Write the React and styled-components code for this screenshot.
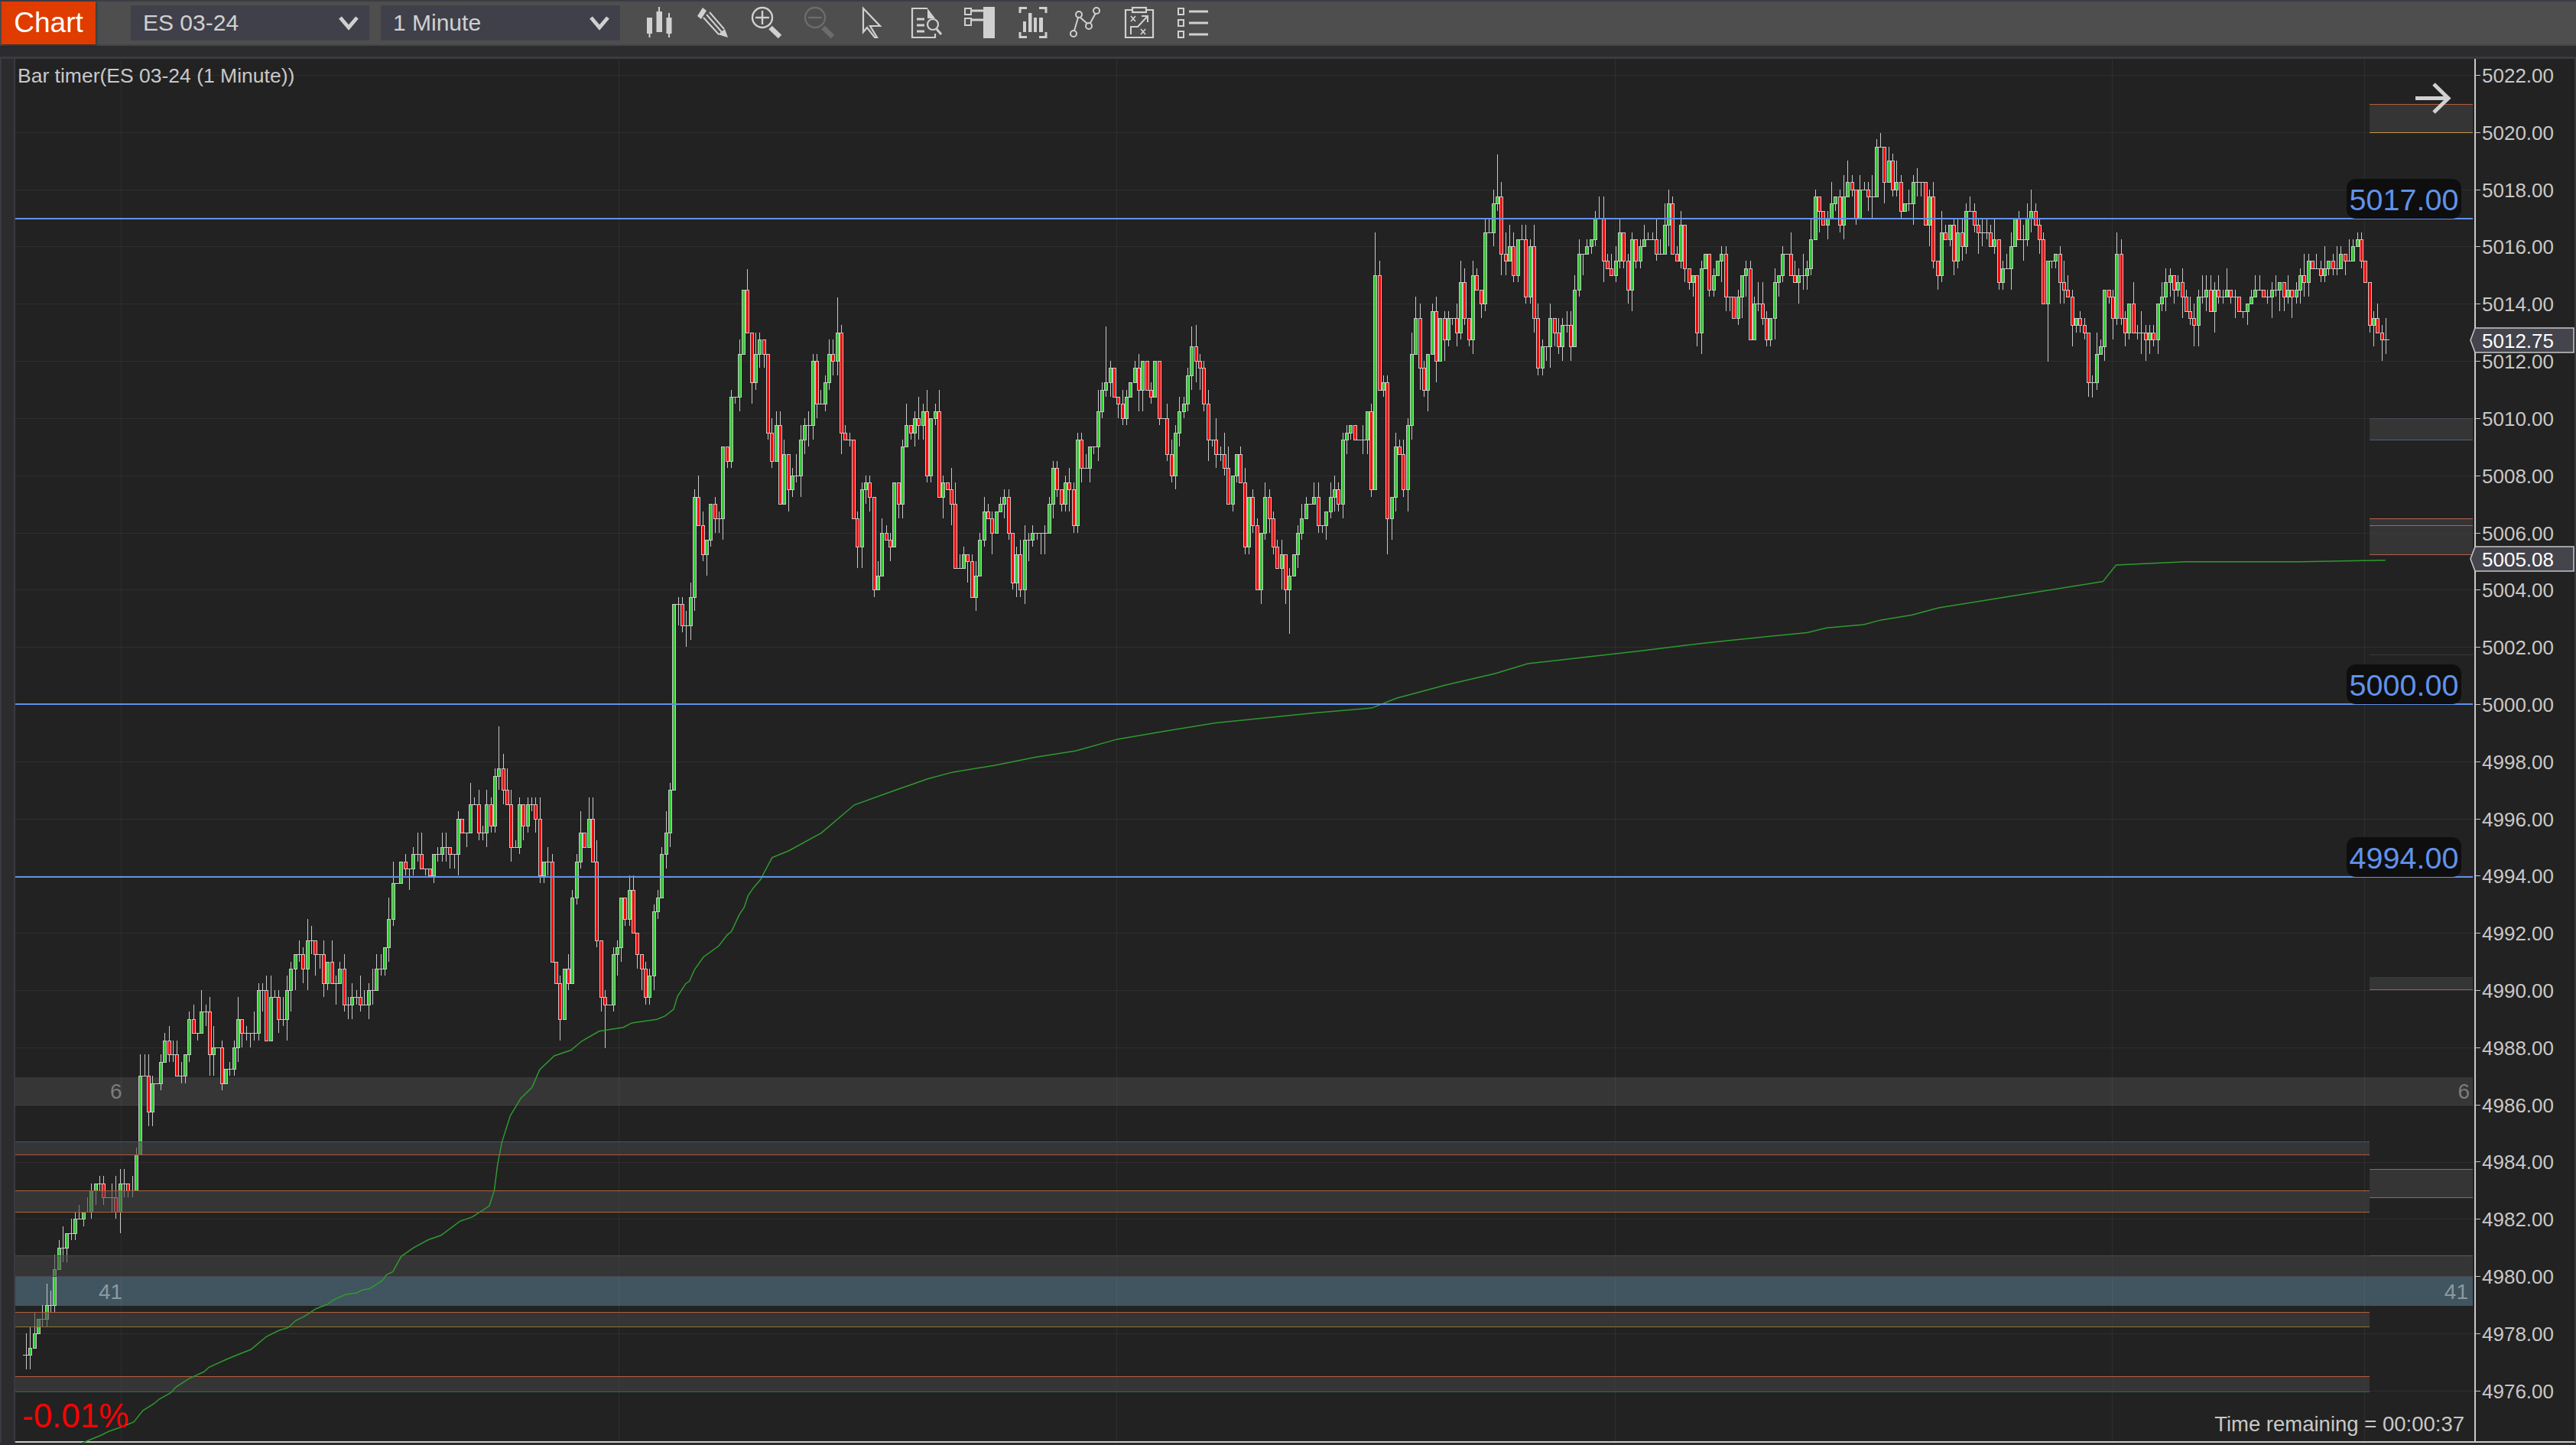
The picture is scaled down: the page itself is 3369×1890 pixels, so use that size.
import React from "react";
import styled, { createGlobalStyle } from "styled-components";

// price scale of the chart, in page pixels
const TOP_TICK_Y = 98;
const PX_PER_POINT = 37.41;
const TICK_PX = PX_PER_POINT / 4;
const PLOT_X = 20;
const PLOT_Y = 77;
const PLOT_W = 3216;
const PLOT_H = 1810;

const priceY = (p) => TOP_TICK_Y + (5022 - p) * PX_PER_POINT;

const trace = (ox, oy, sx, sy, pts) => pts.map(([x, y]) => [ox + x / sx, oy + y / sy]);

// close prices read off the reference
const closes = [
  ...trace(20, 920, 1.823, 1.742, [
    [27,1485],[35,1465],[45,1440],[55,1405],[75,1375],[93,1290],[113,1245],[125,1210],[145,1180],[175,1160],[183,1115],[195,1100],[215,1120],[245,1160],[252,1095],[283,1110],[285,1030],[293,915],[300,850],[315,930],[333,870],[345,820],[360,770],[370,800],[390,850],[402,800],[412,720],[430,750],[450,705],[460,800],[478,785],[490,865],[510,840],[520,785],[530,720],[550,750],[570,750],[578,655],[590,655],[600,770],[610,670],[630,720],[650,655],[660,605],[670,575],[690,600],[697,540],[717,575],[740,640],[747,590],[757,635],[775,605],[787,690],[805,672],[825,685],[847,655],[857,590],[865,605],[878,555],[885,490],[905,410],[917,360],[935,375],[955,345],[975,375],[985,395],[1000,350],[1025,330],[1040,345],[1055,265],[1075,295],[1093,230],[1105,295],[1125,230],[1135,280],[1143,165],[1153,150],[1163,195],[1173,230],[1183,330],[1203,235],[1213,280],[1223,230],[1240,265],[1245,395],[1260,365],[1280,590],[1292,640],[1300,720],[1312,605],[1320,640],[1330,445],[1340,360],[1350,295],[1360,330],[1370,265],[1380,360],[1390,540],[1400,670],[1410,690],[1420,575],[1430,560],[1440,445],[1450,490],[1460,430],[1470,525],[1480,575],[1490,605],[1500,670],[1510,625],[1518,475],[1528,445],[1538,345],[1548,295],[1558,200],
  ]),
  ...trace(860, 330, 1.823, 2.613, [
    [47,1205],[65,1275],[75,1180],[87,840],[95,935],[106,1030],[115,985],[125,860],[145,910],[155,670],[165,715],[185,495],[195,350],[205,130],[214,275],[225,445],[235,350],[245,300],[253,350],[263,620],[273,715],[283,595],[294,860],[303,690],[312,815],[325,765],[343,640],[353,590],[372,375],[382,520],[402,445],[412,350],[422,372],[432,275],[442,615],[452,640],[462,910],[472,1005],[482,815],[491,790],[503,840],[512,1155],[520,1105],[532,960],[541,985],[551,1005],[561,790],[570,860],[580,670],[590,595],[600,618],[610,568],[620,595],[630,545],[638,765],[650,570],[660,545],[670,835],[680,790],[690,815],[700,860],[708,1085],[720,1085],[728,1035],[740,1057],[748,1180],[760,1105],[768,985],[778,888],[788,910],[798,960],[808,888],[818,860],[828,838],[838,960],[847,1130],[858,1035],[868,1155],[878,985],[895,960],[925,960],[928,815],[937,860],[946,740],[956,812],[965,860],[976,790],[985,812],[996,935],[1005,640],[1016,740],[1025,835],[1035,668],[1045,545],[1055,472],[1065,445],[1075,398],[1085,495],[1095,518],[1105,568],[1115,495],[1125,445],[1135,398],[1145,470],[1153,372],[1165,470],[1175,495],[1185,372],[1205,568],[1213,690],[1223,765],[1233,620],[1243,545],[1253,518],[1263,422],[1273,325],[1283,372],[1292,398],[1302,518],[1312,640],[1332,690],[1352,740],[1362,860],[1372,765],[1382,690],[1392,788],[1402,1005],[1412,838],[1421,935],[1431,1155],[1441,960],[1451,838],[1461,910],[1471,1005],[1480,1083],[1491,1035],[1500,1155],[1510,1105],[1520,1035],[1530,960],[1540,910],[1550,862],[1560,838],
  ]),
  ...trace(1700, 170, 1.96, 2.306, [
    [35,1108],[52,1190],[62,1150],[73,1108],[83,1088],[93,1128],[105,935],[115,915],[126,892],[136,935],[158,935],[168,850],[179,1088],[189,440],[200,785],[211,762],[220,1172],[232,1108],[242,960],[254,980],[264,1088],[275,892],[285,678],[295,568],[306,720],[317,785],[328,678],[338,548],[350,695],[360,568],[370,632],[380,570],[403,612],[413,460],[424,568],[434,632],[444,440],[456,482],[466,525],[477,310],[500,225],[510,203],[518,375],[530,395],[540,355],[552,438],[562,332],[583,503],[593,355],[605,568],[615,720],[626,655],[637,568],[647,612],[658,695],[667,655],[678,592],[690,655],[700,483],[720,375],[732,355],[742,332],[763,268],[775,395],[785,418],[795,438],[807,395],[816,310],[828,395],[838,482],[848,332],[859,395],[869,355],[880,332],[900,332],[922,375],[933,290],[944,225],[955,375],[965,395],[977,290],[987,418],[997,460],[1008,440],[1018,612],[1030,420],[1040,375],[1051,482],[1061,440],[1071,395],[1083,375],[1093,503],[1114,568],[1125,503],[1136,440],[1146,418],[1157,632],[1167,528],[1178,528],[1189,568],[1198,632],[1210,568],[1220,460],[1232,440],[1242,375],[1254,438],[1263,418],[1273,460],[1284,438],[1295,418],[1306,332],[1316,203],[1328,245],[1338,290],[1348,268],[1359,225],[1369,203],[1380,290],[1390,203],[1402,160],[1412,182],[1422,265],[1443,182],[1453,200],[1465,200],[1487,52],[1497,160],[1508,95],[1518,180],[1530,160],[1540,245],[1550,225],
  ]),
  ...trace(2400, 150, 1.96, 3, [
    [200,268],[218,268],[232,435],[243,322],[252,575],[263,630],[273,463],[285,490],[295,435],[307,573],[317,463],[327,520],[338,380],[360,435],[370,463],[392,463],[402,520],[412,490],[423,658],[434,605],[455,520],[466,410],[476,490],[487,410],[497,380],[509,435],[519,490],[529,745],[550,575],[562,548],[572,658],[583,688],[593,715],[603,830],[616,800],[626,828],[636,855],[658,1050],[668,940],[678,913],[689,688],[699,715],[710,800],[720,548],[732,800],[743,855],[752,745],[763,855],[785,855],[795,885],[805,857],[816,885],[826,745],[838,715],[848,658],[859,632],[869,688],[880,658],[890,715],[901,770],[912,800],[921,830],[934,715],[954,688],[965,772],[975,688],[985,715],[1008,690],[1018,715],[1030,715],[1040,772],[1060,745],[1070,715],[1082,688],[1092,688],[1102,715],[1124,688],[1135,658],[1146,715],[1155,688],[1166,715],[1178,688],[1190,632],[1199,658],[1210,575],[1230,605],[1243,630],[1252,605],[1263,575],[1284,605],[1295,548],[1316,575],[1326,520],[1337,490],[1348,575],[1359,658],[1369,830],[1379,800],[1390,855],[1400,885],[1412,885],
  ]),
];

// the wicks that stand out on the chart
const spikes = [
  [977,352],[1097,389],[1444,427],[1558,427],[1688,829],[1796,304],[1812,725],[1959,202],[2459,174],[2736,520],[2675,473],[793,1371],[652,950],[38,1791],
];

const nearest = (pts, x) => {
  let best = pts[0];
  pts.forEach((p) => {
    if (Math.abs(p[0] - x) < Math.abs(best[0] - x)) best = p;
  });
  return best[1];
};

const snap = (y) => TOP_TICK_Y + Math.round((y - TOP_TICK_Y) / TICK_PX) * TICK_PX;

const buildCandles = () => {
  const wickTicks = [0, 0, 1, 1, 1, 2, 2, 3];
  let seed = 41;
  const next = () => {
    seed = (seed * 16807) % 2147483647;
    return seed;
  };
  const out = [];
  const first = 34;
  const step = (3120 - first) / 579;
  let prev = snap(closes[0][1]);
  for (let i = 0; i <= 579; i++) {
    const x = first + i * step;
    const close = snap(nearest(closes, x));
    const top = Math.min(prev, close);
    const bottom = Math.max(prev, close);
    let high = top - wickTicks[next() % 8] * TICK_PX;
    let low = bottom + wickTicks[next() % 8] * TICK_PX;
    spikes.forEach(([sx, sy]) => {
      if (Math.abs(sx - x) <= step / 2) {
        if (sy < top) high = sy;
        else low = sy;
      }
    });
    out.push({ x: Math.round(x), open: prev, close, top, bottom, high, low });
    prev = close;
  }
  return out;
};

const candles = buildCandles();

const vwap = [
  ...trace(0, 1380, 3, 3, [
    [315,1525],[360,1507],[400,1490],[430,1475],[470,1462],[525,1440],[560,1395],[605,1367],[625,1350],[670,1325],[690,1303],[740,1270],[800,1243],[820,1225],[890,1193],[930,1177],[985,1155],[1015,1130],[1045,1105],[1095,1080],[1130,1070],[1160,1042],[1195,1025],[1240,995],[1285,978],[1310,960],[1355,940],[1400,933],[1420,922],[1450,917],[1500,885],
  ]),
  ...trace(20, 920, 1.823, 1.742, [
    [885,1302],[900,1295],[920,1260],[950,1240],[985,1222],[1015,1212],[1060,1180],[1090,1170],[1130,1145],[1142,1110],[1150,1050],[1160,1000],[1180,940],[1205,900],[1232,875],[1250,835],[1285,803],[1325,790],[1350,770],[1392,747],[1450,738],[1470,728],[1530,720],[1550,712],
  ]),
  ...trace(600, 930, 3, 3, [
    [843,1170],[858,1120],[890,1070],[905,1060],[925,1015],[960,965],[1020,922],[1052,880],[1070,865],[1100,800],[1120,770],[1135,725],[1155,695],[1185,660],[1200,630],
  ]),
  ...trace(0, 0, 0.46541, 0.46541, [
    [470,522],[480,518],[500,507],[520,490],[545,481],[565,474],[580,470],[605,466],[630,461],[655,457],[680,450],[710,445],[740,440],[770,437],[800,434],[835,431],[850,425],[880,417],[910,410],[930,404],[965,400],[1000,396],
  ]),
  ...trace(1700, 170, 1.96, 2.306, [
    [985,1555],[1040,1547],[1100,1540],[1200,1528],[1300,1516],[1350,1502],[1445,1492],[1490,1478],[1568,1463],
  ]),
  ...trace(0, 0, 0.46541, 0.46541, [
    [1180,370],[1230,362],[1280,354],[1288,344],[1330,342],[1400,342],[1452,341],
  ]),
].map(([x, y]) => `${x.toFixed(1)},${y.toFixed(1)}`).join(" ");

const priceTicks = Array.from({ length: 24 }, (_, i) => 5022 - i * 2);
const gridColumns = [158, 809, 1460, 2112, 2762, 3092];

// zones drawn under the candles
const underZones = [
  { y1: 1409, y2: 1446, x2: 3234, fill: "#363636" },
  { y1: 1669, y2: 1708, x2: 3234, fill: "#40555f" },
];

// zones drawn over the candles, with their edge lines
const overZones = [
  { x1: 20, x2: 3234, y1: 1642, y2: 1669, top: "#4f4b38", bottom: "#4a4452" },
  { x1: 20, x2: 3099, y1: 1493, y2: 1510, top: "#3a5a78", bottom: "#b05a3a" },
  { x1: 20, x2: 3099, y1: 1557, y2: 1585, top: "#a8643f", bottom: "#a8643f" },
  { x1: 20, x2: 3099, y1: 1716, y2: 1735, top: "#b05f3f", bottom: "#8a7a2a" },
  { x1: 20, x2: 3099, y1: 1800, y2: 1820, top: "#b55f3f", bottom: "#3f5a5a" },
  { x1: 3099, x2: 3234, y1: 1529, y2: 1566, top: "#a8643f", bottom: "#b0603f" },
  { x1: 3099, x2: 3234, y1: 136, y2: 173, top: "#b55f3f", bottom: "#c8954f" },
  { x1: 3099, x2: 3234, y1: 547, y2: 575, top: "#4a4a55", bottom: "#4f6478" },
  { x1: 3099, x2: 3234, y1: 678, y2: 725, top: "#b8654a", bottom: "#a8644a" },
  { x1: 3099, x2: 3234, y1: 1278, y2: 1294, top: "#3a3a3a", bottom: "#a8603f" },
];

const GlobalStyle = createGlobalStyle`
  html, body {
    margin: 0;
    padding: 0;
    background: #2c2c2e;
  }
  body {
    font-family: "Liberation Sans", Arial, sans-serif;
  }
`;

const Page = styled.div`
  width: 3369px;
  height: 1890px;
  overflow: hidden;
  background: #2c2c2e;
  display: flex;
  flex-direction: column;
`;

const Toolbar = styled.div`
  height: 56px;
  display: flex;
  align-items: center;
  padding-left: 2px;
  background: #4e4e4e;
  border-top: 2px solid #3c3c44;
  border-bottom: 2px solid #444446;
`;

const Badge = styled.div`
  width: 123px;
  height: 56px;
  display: flex;
  align-items: center;
  justify-content: center;
  background: #e03c00;
  color: #fff;
  font-size: 37px;
  box-shadow: 1px 1px 3px rgba(0, 0, 0, 0.4);
  margin-right: 46px;
`;

const Picker = styled.div`
  width: ${({ $width }) => $width}px;
  height: 46px;
  box-sizing: border-box;
  padding: 0 14px 0 16px;
  margin-right: 15px;
  display: flex;
  align-items: center;
  justify-content: space-between;
  background: #40404a;
  color: #d0d0d0;
  font-size: 30px;
`;

const Tools = styled.div`
  display: flex;
  align-items: center;
  gap: 25.8px;
  margin-left: 14px;
`;

const Gutter = styled.div`
  height: 14px;
  border-bottom: 3px solid #3a3a42;
`;

const Workspace = styled.div`
  display: flex;
  height: 1810px;
`;

const Rail = styled.div`
  width: 16px;
  border-left: 2px solid #3a3a42;
  border-right: 2px solid #3a3a42;
`;

const Plot = styled.div`
  position: relative;
  width: ${PLOT_W}px;
  height: ${PLOT_H}px;
  background: #222222;
  box-sizing: border-box;
  border-bottom: 2px solid #c8c8c8;
`;

const ChartCanvas = styled.svg`
  position: absolute;
  inset: 0;
  display: block;
`;

const Legend = styled.div`
  position: absolute;
  left: 3px;
  top: 7px;
  line-height: 30px;
  font-size: 26.5px;
  color: #c8c8c8;
`;

const PriceBox = styled.div`
  position: absolute;
  left: 3049px;
  top: ${({ $bottom }) => $bottom - 52 - PLOT_Y}px;
  width: 150px;
  height: 52px;
  box-sizing: border-box;
  border-radius: 12px;
  background: #0e0e0e;
  color: #6192ea;
  font-size: 39.5px;
  line-height: 54px;
  text-align: center;
`;

const ZoneCount = styled.div`
  position: absolute;
  top: ${({ $top }) => $top}px;
  ${({ $left }) => ($left !== undefined ? `left: ${$left}px;` : "")}
  ${({ $right }) => ($right !== undefined ? `right: ${$right}px;` : "")}
  font-size: 28px;
  line-height: 30px;
  color: ${({ $color }) => $color};
`;

const ChangeLabel = styled.div`
  position: absolute;
  left: 9px;
  top: 1750px;
  font-size: 44px;
  line-height: 50px;
  color: #ff0000;
`;

const TimeLabel = styled.div`
  position: absolute;
  right: 13px;
  top: 1771px;
  font-size: 27.5px;
  line-height: 30px;
  color: #c8c8c8;
`;

const Axis = styled.div`
  position: relative;
  flex: 1;
  box-sizing: border-box;
  height: ${PLOT_H}px;
  padding-top: 21px;
  background: #222222;
  border-left: 2px solid #c8c8c8;
  border-right: 2px solid #38383e;
  border-bottom: 2px solid #c8c8c8;
`;

const AxisRow = styled.div`
  position: relative;
  height: ${PX_PER_POINT * 2}px;
  padding-left: 8px;
  font-size: 26px;
  line-height: 30px;
  color: #c8c8c8;

  &::before {
    content: "";
    position: absolute;
    left: 0;
    top: 0;
    width: 6px;
    height: 1px;
    background: #c8c8c8;
  }
`;

const AxisText = styled.div`
  transform: translateY(-14px);
`;

const PriceTag = styled.div`
  position: absolute;
  left: -8px;
  top: ${({ $center }) => $center - 17 - PLOT_Y}px;
  width: 137px;
  height: 34px;
  padding-left: 16px;
  box-sizing: border-box;
  font-size: 26px;
  line-height: 36px;
  color: #fff;
`;

const TagShape = styled.svg`
  position: absolute;
  inset: 0;
  z-index: 0;
`;

const TagText = styled.span`
  position: relative;
`;

const Chevron = () => (
  <svg width="26" height="20" viewBox="0 0 26 20">
    <path d="M2 3 L13 16 L24 3" fill="none" stroke="#d0d0d0" strokeWidth="5" />
  </svg>
);

const ToolIcon = ({ children, color = "#d0d0d0" }) => (
  <svg width="44" height="44" viewBox="0 0 44 44" fill="none" stroke={color} color={color}>
    {children}
  </svg>
);

const Magnifier = ({ color, vertical }) => (
  <ToolIcon color={color}>
    <circle cx="17" cy="15" r="13" strokeWidth="2.4" />
    <path d="M8 15H26" strokeWidth="2.4" />
    {vertical && <path d="M17 6V24" strokeWidth="2.4" />}
    <path d="M27.5 28 L40 40" strokeWidth="6.5" />
  </ToolIcon>
);

const toolIcons = [
  <ToolIcon key="bars">
    <path d="M6 15h7v21H6zM18.5 7H26v27h-7.5zM31.5 15h7v21h-7z" fill="currentColor" stroke="none" />
    <path d="M9.5 36v5M22 1v6M35 9v6M35 36v5" strokeWidth="2" />
  </ToolIcon>,
  <ToolIcon key="pencil">
    <path d="M2 13 L9 2 L14 6 L7 17 Z" fill="currentColor" stroke="none" />
    <path d="M10 15 L30 37 M14 11 L34 34 M18 8 L37 30" strokeWidth="2" />
    <path d="M29 37 L38 30 L42 41 Z" fill="currentColor" stroke="none" />
  </ToolIcon>,
  <Magnifier key="zoom-in" color="#d0d0d0" vertical />,
  <Magnifier key="zoom-out" color="#6c6c6c" />,
  <ToolIcon key="cursor">
    <path d="M10 3 L32 26 H19 L28 41 H25 L15 28 L10 34 Z" strokeWidth="2.2" />
  </ToolIcon>,
  <ToolIcon key="doc">
    <path d="M24 3H4V41H34V36" strokeWidth="2.2" />
    <path d="M24 3 L34 16 H24 Z" fill="currentColor" stroke="none" />
    <path d="M10 17h10M10 25h10M10 33h10" strokeWidth="3" />
    <circle cx="31" cy="24" r="7" strokeWidth="2.2" />
    <path d="M36 30 L42 37" strokeWidth="3" />
  </ToolIcon>,
  <ToolIcon key="databox">
    <rect x="27" y="1" width="15" height="41" fill="currentColor" stroke="none" />
    <rect x="3" y="3" width="8" height="8" strokeWidth="2" />
    <rect x="3" y="16" width="8" height="9" strokeWidth="2" />
    <path d="M11 6H27M11 18H27" strokeWidth="3" />
  </ToolIcon>,
  <ToolIcon key="frame">
    <path d="M14 2.5H5V9M30 2.5H39V9M14 40.5H5V34M30 40.5H39V34" strokeWidth="3" />
    <path d="M9 20h4v14H9zM16 9h4.5v25H16zM23 15h4v19h-4zM30 15h5v19h-5z" fill="currentColor" stroke="none" />
  </ToolIcon>,
  <ToolIcon key="nodes">
    <circle cx="6" cy="36" r="4" strokeWidth="2" />
    <circle cx="13" cy="11" r="4" strokeWidth="2" />
    <circle cx="26" cy="26" r="4" strokeWidth="2" />
    <circle cx="36" cy="6" r="4" strokeWidth="2" />
    <path d="M7 32 L12 15 M15 15 L24 23 M28 22 L34.500 10" strokeWidth="2" />
  </ToolIcon>,
  <ToolIcon key="clipboard">
    <path d="M12 5H4V41H40V5H32" strokeWidth="2.2" />
    <rect x="13" y="2" width="18" height="6" strokeWidth="2.2" />
    <path d="M11 13 L17 20 M17 13 L11 20 M24 30 L30 37 M30 30 L24 37" strokeWidth="1.8" />
    <path d="M11 37V27H20L32 14 M25 13H33V21" strokeWidth="2" />
  </ToolIcon>,
  <ToolIcon key="list">
    <rect x="3" y="3" width="7" height="8" strokeWidth="2" />
    <rect x="3" y="18" width="7" height="8" strokeWidth="2" />
    <rect x="3" y="33" width="7" height="8" strokeWidth="2" />
    <path d="M17 7H42M17 22H42M17 37H42" strokeWidth="3" />
  </ToolIcon>,
];

const Candle = ({ c }) => {
  const doji = c.top === c.bottom;
  const up = c.close < c.open;
  return (
    <g>
      <rect x={c.x} y={c.high} width="1" height={c.low - c.high} fill="#c8c8c8" />
      {doji ? (
        <rect x={c.x - 4} y={c.top} width="9" height="1" fill="#c8c8c8" />
      ) : (
        <>
          <rect x={c.x - 2} y={c.top} width="5" height={c.bottom - c.top + 1} fill="#c8c8c8" />
          <rect x={c.x - 1} y={c.top + 1} width="3" height={c.bottom - c.top - 1} fill={up ? "#32cd32" : "#ff0000"} />
        </>
      )}
    </g>
  );
};

const App = () => {
  return (
    <Page>
      <GlobalStyle />
      <Toolbar>
        <Badge>Chart</Badge>
        <Picker $width={312}>
          ES 03-24
          <Chevron />
        </Picker>
        <Picker $width={313}>
          1 Minute
          <Chevron />
        </Picker>
        <Tools>{toolIcons}</Tools>
      </Toolbar>
      <Gutter />
      <Workspace>
        <Rail />
        <Plot>
          <ChartCanvas
            width={PLOT_W}
            height={PLOT_H}
            viewBox={`${PLOT_X} ${PLOT_Y} ${PLOT_W} ${PLOT_H}`}
            shapeRendering="crispEdges"
          >
            {underZones.map((z) => (
              <rect key={z.y1} x={PLOT_X} y={z.y1} width={z.x2 - PLOT_X} height={z.y2 - z.y1} fill={z.fill} />
            ))}
            {priceTicks.map((p) => (
              <rect key={p} x={PLOT_X} y={Math.round(priceY(p))} width={PLOT_W} height="1" fill="rgba(255,255,255,0.055)" />
            ))}
            {gridColumns.map((x) => (
              <rect key={x} x={x} y={PLOT_Y} width="1" height={PLOT_H} fill="rgba(255,255,255,0.055)" />
            ))}
            {candles.map((c) => (
              <Candle key={c.x} c={c} />
            ))}
            {overZones.map((z) => (
              <g key={`${z.x1}-${z.y1}`}>
                <rect x={z.x1} y={z.y1} width={z.x2 - z.x1} height={z.y2 - z.y1} fill="rgba(70,70,70,0.55)" />
                <rect x={z.x1} y={z.y1} width={z.x2 - z.x1} height="1" fill={z.top} />
                <rect x={z.x1} y={z.y2} width={z.x2 - z.x1} height="1" fill={z.bottom} />
              </g>
            ))}
            <rect x="3099" y="687" width="135" height="1" fill="#a8644a" />
            <rect x="3099" y="856" width="135" height="1" fill="#3a3a3a" />
            <rect x="3099" y="1642" width="135" height="1" fill="#5a5f58" />
            <polyline points={vwap} fill="none" stroke="#2f9a2f" strokeWidth="1.5" shapeRendering="auto" />
            {[286, 921, 1147].map((y) => (
              <rect key={y} x={PLOT_X} y={y - 1} width={3214} height="2" fill="#6192ea" />
            ))}
            <path
              d="M3159 128.500H3202 M3183 110 L3202 128.500 L3183 147"
              fill="none"
              stroke="#d0d0d0"
              strokeWidth="5"
              shapeRendering="auto"
            />
          </ChartCanvas>
          <Legend>Bar timer(ES 03-24 (1 Minute))</Legend>
          <PriceBox $bottom={286}>5017.00</PriceBox>
          <PriceBox $bottom={921}>5000.00</PriceBox>
          <PriceBox $bottom={1147}>4994.00</PriceBox>
          <ZoneCount $top={1336} $left={124} $color="#7c7c7c">6</ZoneCount>
          <ZoneCount $top={1336} $right={6} $color="#7c7c7c">6</ZoneCount>
          <ZoneCount $top={1598} $left={109} $color="#8b9aa0">41</ZoneCount>
          <ZoneCount $top={1598} $right={8} $color="#8b9aa0">41</ZoneCount>
          <ChangeLabel>-0.01%</ChangeLabel>
          <TimeLabel>Time remaining = 00:00:37</TimeLabel>
        </Plot>
        <Axis>
          {priceTicks.map((p) => (
            <AxisRow key={p}>
              <AxisText>{p.toFixed(2)}</AxisText>
            </AxisRow>
          ))}
          {[
            ["5012.75", 445],
            ["5005.08", 731],
          ].map(([price, center]) => (
            <PriceTag key={price} $center={center}>
              <TagShape width="137" height="34" viewBox="0 0 137 34">
                <polygon points="1,17 7,1 136,1 136,33 7,33" fill="#44444c" stroke="#c8c8c8" strokeWidth="1.5" />
              </TagShape>
              <TagText>{price}</TagText>
            </PriceTag>
          ))}
        </Axis>
      </Workspace>
    </Page>
  );
};

export default App;
